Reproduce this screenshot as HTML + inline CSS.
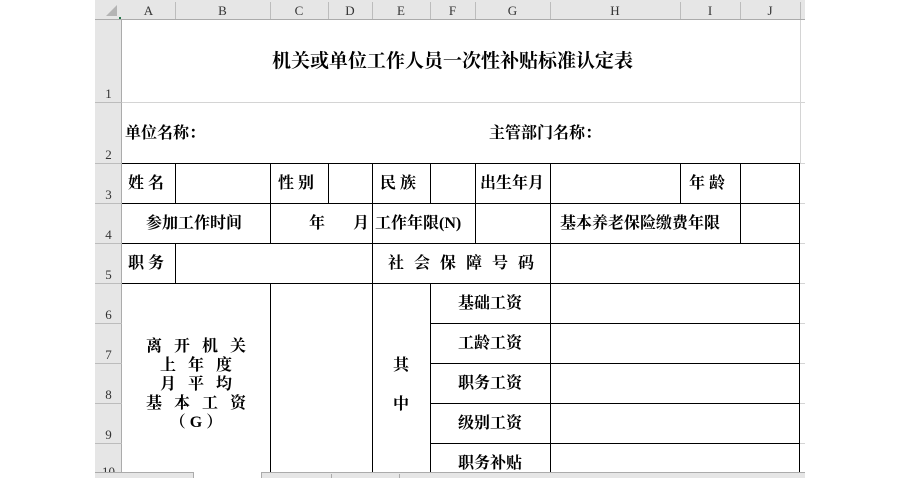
<!DOCTYPE html>
<html><head><meta charset="utf-8"><style>
*{margin:0;padding:0;box-sizing:border-box}
body{width:900px;height:478px;background:#fff;position:relative;overflow:hidden;font-family:"Liberation Serif","Noto Serif CJK SC",serif;}
.a{position:absolute}
.hl{position:absolute;height:1px;background:#000}
.vl{position:absolute;width:1px;background:#000}
.gh{position:absolute;height:1px;background:#d4d4d4}
.gv{position:absolute;width:1px;background:#d4d4d4}
.t{position:absolute;font-weight:bold;font-size:16px;line-height:20px;color:#000;white-space:nowrap}
.ch{position:absolute;top:0;height:20px;line-height:21px;font-size:13px;color:#333;text-align:center;font-family:"Liberation Serif","Noto Serif CJK SC",serif}
.rh{position:absolute;left:95px;width:27px;font-size:13px;color:#333;text-align:center;font-family:"Liberation Serif",serif}
</style></head><body>
<div class="a" style="left:95px;top:0;width:710px;height:20px;background:#e6e6e6;border-bottom:1px solid #ababab"></div>
<div class="a" style="left:95px;top:20px;width:27px;height:452px;background:#e6e6e6;border-right:1px solid #ababab"></div>
<svg class="a" style="left:95px;top:0" width="27" height="20"><polygon points="22,5 22,16 11,16" fill="#b4b4b4"/><rect x="24" y="17" width="2" height="2" fill="#217346"/></svg>
<div class="gv" style="left:175px;top:2px;height:17px;background:#bcbcbc"></div>
<div class="gv" style="left:270px;top:2px;height:17px;background:#bcbcbc"></div>
<div class="gv" style="left:328px;top:2px;height:17px;background:#bcbcbc"></div>
<div class="gv" style="left:372px;top:2px;height:17px;background:#bcbcbc"></div>
<div class="gv" style="left:430px;top:2px;height:17px;background:#bcbcbc"></div>
<div class="gv" style="left:475px;top:2px;height:17px;background:#bcbcbc"></div>
<div class="gv" style="left:550px;top:2px;height:17px;background:#bcbcbc"></div>
<div class="gv" style="left:680px;top:2px;height:17px;background:#bcbcbc"></div>
<div class="gv" style="left:740px;top:2px;height:17px;background:#bcbcbc"></div>
<div class="gv" style="left:800px;top:2px;height:17px;background:#bcbcbc"></div>
<div class="ch" style="left:122px;width:53px">A</div>
<div class="ch" style="left:175px;width:95px">B</div>
<div class="ch" style="left:270px;width:58px">C</div>
<div class="ch" style="left:328px;width:44px">D</div>
<div class="ch" style="left:372px;width:58px">E</div>
<div class="ch" style="left:430px;width:45px">F</div>
<div class="ch" style="left:475px;width:75px">G</div>
<div class="ch" style="left:550px;width:130px">H</div>
<div class="ch" style="left:680px;width:60px">I</div>
<div class="ch" style="left:740px;width:60px">J</div>
<div class="a" style="left:95px;top:102px;width:27px;height:1px;background:#bcbcbc"></div>
<div class="a" style="left:95px;top:163px;width:27px;height:1px;background:#bcbcbc"></div>
<div class="a" style="left:95px;top:203px;width:27px;height:1px;background:#bcbcbc"></div>
<div class="a" style="left:95px;top:243px;width:27px;height:1px;background:#bcbcbc"></div>
<div class="a" style="left:95px;top:283px;width:27px;height:1px;background:#bcbcbc"></div>
<div class="a" style="left:95px;top:323px;width:27px;height:1px;background:#bcbcbc"></div>
<div class="a" style="left:95px;top:363px;width:27px;height:1px;background:#bcbcbc"></div>
<div class="a" style="left:95px;top:403px;width:27px;height:1px;background:#bcbcbc"></div>
<div class="a" style="left:95px;top:443px;width:27px;height:1px;background:#bcbcbc"></div>
<div class="rh" style="top:86px">1</div>
<div class="rh" style="top:147px">2</div>
<div class="rh" style="top:187px">3</div>
<div class="rh" style="top:227px">4</div>
<div class="rh" style="top:267px">5</div>
<div class="rh" style="top:307px">6</div>
<div class="rh" style="top:347px">7</div>
<div class="rh" style="top:387px">8</div>
<div class="rh" style="top:427px">9</div>
<div class="rh" style="top:464px">10</div>
<div class="gh" style="left:122px;top:102px;width:683px"></div>
<div class="gh" style="left:800px;top:163px;width:5px"></div>
<div class="gh" style="left:800px;top:203px;width:5px"></div>
<div class="gh" style="left:800px;top:243px;width:5px"></div>
<div class="gh" style="left:800px;top:283px;width:5px"></div>
<div class="gh" style="left:800px;top:323px;width:5px"></div>
<div class="gh" style="left:800px;top:363px;width:5px"></div>
<div class="gh" style="left:800px;top:403px;width:5px"></div>
<div class="gh" style="left:800px;top:443px;width:5px"></div>
<div class="gv" style="left:800px;top:20px;height:143px"></div>
<div class="hl" style="left:122px;top:163px;width:678px"></div>
<div class="hl" style="left:122px;top:203px;width:678px"></div>
<div class="hl" style="left:122px;top:243px;width:678px"></div>
<div class="hl" style="left:122px;top:283px;width:678px"></div>
<div class="hl" style="left:430px;top:323px;width:370px"></div>
<div class="hl" style="left:430px;top:363px;width:370px"></div>
<div class="hl" style="left:430px;top:403px;width:370px"></div>
<div class="hl" style="left:430px;top:443px;width:370px"></div>
<div class="vl" style="left:799px;top:163px;height:309px"></div>
<div class="vl" style="left:175px;top:163px;height:40px"></div>
<div class="vl" style="left:270px;top:163px;height:40px"></div>
<div class="vl" style="left:328px;top:163px;height:40px"></div>
<div class="vl" style="left:372px;top:163px;height:40px"></div>
<div class="vl" style="left:430px;top:163px;height:40px"></div>
<div class="vl" style="left:475px;top:163px;height:40px"></div>
<div class="vl" style="left:550px;top:163px;height:40px"></div>
<div class="vl" style="left:680px;top:163px;height:40px"></div>
<div class="vl" style="left:740px;top:163px;height:40px"></div>
<div class="vl" style="left:270px;top:203px;height:40px"></div>
<div class="vl" style="left:372px;top:203px;height:40px"></div>
<div class="vl" style="left:475px;top:203px;height:40px"></div>
<div class="vl" style="left:550px;top:203px;height:40px"></div>
<div class="vl" style="left:740px;top:203px;height:40px"></div>
<div class="vl" style="left:175px;top:243px;height:40px"></div>
<div class="vl" style="left:372px;top:243px;height:40px"></div>
<div class="vl" style="left:550px;top:243px;height:40px"></div>
<div class="vl" style="left:270px;top:283px;height:189px"></div>
<div class="vl" style="left:372px;top:283px;height:189px"></div>
<div class="vl" style="left:430px;top:283px;height:189px"></div>
<div class="vl" style="left:550px;top:283px;height:189px"></div>
<div class="t" style="left:272px;top:51px;font-size:19px;line-height:22px">机关或单位工作人员一次性补贴标准认定表</div>
<div class="t" style="left:125px;top:124px">单位名称：</div>
<div class="t" style="left:489px;top:124px">主管部门名称：</div>
<div class="t" style="left:128px;top:174px">姓 名</div>
<div class="t" style="left:278px;top:174px">性 别</div>
<div class="t" style="left:380px;top:174px">民 族</div>
<div class="t" style="left:480px;top:174px">出生年月</div>
<div class="t" style="left:689px;top:174px">年 龄</div>
<div class="t" style="left:146px;top:214px">参加工作时间</div>
<div class="t" style="left:309px;top:214px">年</div>
<div class="t" style="left:353px;top:214px">月</div>
<div class="t" style="left:375px;top:214px">工作年限(N)</div>
<div class="t" style="left:560px;top:214px">基本养老保险缴费年限</div>
<div class="t" style="left:128px;top:254px">职 务</div>
<div class="t" style="left:388px;top:254px;letter-spacing:10px">社会保障号码</div>
<div class="t" style="left:458px;top:294px">基础工资</div>
<div class="t" style="left:458px;top:334px">工龄工资</div>
<div class="t" style="left:458px;top:374px">职务工资</div>
<div class="t" style="left:458px;top:414px">级别工资</div>
<div class="t" style="left:458px;top:454px">职务补贴</div>
<div class="t" style="left:122px;top:337px;width:148px;text-align:center;line-height:19px;letter-spacing:4px;padding-left:4px">离 开 机 关<br>上 年 度<br>月 平 均<br>基 本 工 资<br>（G）</div>
<div class="t" style="left:372px;top:356px;width:58px;text-align:center">其</div>
<div class="t" style="left:372px;top:395px;width:58px;text-align:center">中</div>
<div class="a" style="left:95px;top:472px;width:710px;height:6px;background:#e6e6e6;border-top:1px solid #ababab"></div>
<div class="a" style="left:193px;top:472px;width:69px;height:6px;background:#fff;border-left:1px solid #ababab;border-right:1px solid #ababab"></div>
<div class="a" style="left:331px;top:474px;width:1px;height:4px;background:#ababab"></div>
<div class="a" style="left:399px;top:474px;width:1px;height:4px;background:#ababab"></div>
</body></html>
